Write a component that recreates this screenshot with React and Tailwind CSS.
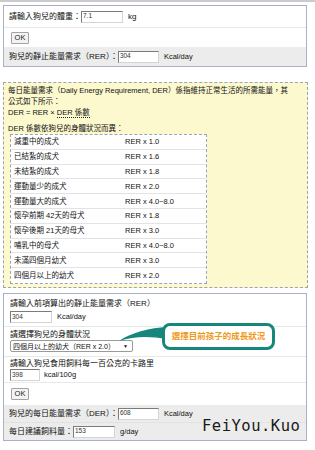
import React from "react";

function Input({ w, value }) {
  return (
    <span
      className={`${w} h-[12px] inline-flex items-center bg-white border border-t-[#7b7b7b] border-l-[#7b7b7b] border-r-[#d4d4d4] border-b-[#d4d4d4] pl-[1px] text-[6.5px] leading-none text-[#333]`}
    >
      {value}
    </span>
  );
}

function Btn() {
  return (
    <span className="w-[18px] h-[12px] inline-flex items-center justify-center bg-[#f3f3f3] border border-[#a3a3a3] rounded-[1px] text-[7.5px] leading-none text-[#222]">
      OK
    </span>
  );
}

const rows = [
  ["減重中的成犬", "RER x 1.0"],
  ["已結紮的成犬", "RER x 1.6"],
  ["未結紮的成犬", "RER x 1.8"],
  ["運動量少的成犬", "RER x 2.0"],
  ["運動量大的成犬", "RER x 4.0~8.0"],
  ["懷孕前期 42天的母犬", "RER x 1.8"],
  ["懷孕後期 21天的母犬", "RER x 3.0"],
  ["哺乳中的母犬", "RER x 4.0~8.0"],
  ["未滿四個月幼犬", "RER x 3.0"],
  ["四個月以上的幼犬", "RER x 2.0"],
];

export default function App() {
  return (
    <div className="relative w-[315px] h-[450px] overflow-hidden bg-white text-[#111] font-['Liberation_Sans','Noto_Sans_CJK_TC',sans-serif] text-[8px]">
      <div className="h-[2px] bg-[#cbcbcb]" />

      {/* Panel 1 */}
      <div className="mt-[3px] ml-[3px] w-[304px] border border-[#a9b1c6] bg-white">
        <div className="h-[22px] flex items-center pl-[5px] border-b border-[#e8e8e8]">
          <span>請輸入狗兒的體重：</span>
          <Input w="w-[42px]" value="7.1" />
          <span className="ml-[5px]">kg</span>
        </div>
        <div className="h-[19px] flex items-center pl-[7px]">
          <Btn />
        </div>
        <div className="h-[19px] flex items-center pl-[5px] bg-[#ececec]">
          <span>狗兒的靜止能量需求（RER）：</span>
          <Input w="w-[41px]" value="304" />
          <span className="ml-[5px] text-[7.5px]">Kcal/day</span>
        </div>
      </div>

      {/* Panel 2 */}
      <div className="mt-[15px] ml-[3px] w-[305px] h-[206px] border border-dashed border-[#9ea3b2] bg-[#fcf9cf] pl-[4px] pt-[2px] text-[7.5px] leading-[11px]">
        <div className="whitespace-nowrap">
          每日能量需求（Daily Energy Requirement, DER）係指維持正常生活的所需能量，其
        </div>
        <div>公式如下所示：</div>
        <div className="mb-[5px]">
          DER = RER × <span className="border-b border-dotted border-[#222]">DER 係數</span>
        </div>
        <div>DER 係數依狗兒的身體狀況而異：</div>
        <div className="ml-[2px] w-[197px] border border-dashed border-[#9ea3b2] bg-white">
          {rows.map(([a, b], i) => (
            <div
              key={i}
              className={`h-[14.8px] grid grid-cols-[111px_1fr] items-center pl-[3px] ${
                i < rows.length - 1 ? "border-b border-[#e3e3e3]" : ""
              }`}
            >
              <span>{a}</span>
              <span>{b}</span>
            </div>
          ))}
        </div>
      </div>

      {/* Panel 3 */}
      <div className="mt-[5px] ml-[3px] w-[304px] border border-[#a9b1c6] bg-white">
        <div className="h-[33px] pl-[6px] pt-[4px] border-b border-[#e8e8e8]">
          <div className="leading-[11px]">請輸入前項算出的靜止能量需求（RER）</div>
          <div className="mt-[2px] flex items-center">
            <Input w="w-[42px]" value="304" />
            <span className="ml-[5px] text-[7.5px]">Kcal/day</span>
          </div>
        </div>
        <div className="h-[30px] pl-[6px] pt-[2px] border-b border-[#e8e8e8]">
          <div className="leading-[11px]">請選擇狗兒的身體狀況</div>
          <div className="w-[123px] h-[12px] flex items-center justify-between bg-white border border-[#9a9a9a] rounded-[2px] px-[2px] text-[7px] leading-none">
            <span>四個月以上的幼犬（RER x 2.0）</span>
            <span className="text-[5px] mr-[2px]">▼</span>
          </div>
        </div>
        <div className="h-[26px] pl-[6px] pt-[1px] border-b border-[#e8e8e8]">
          <div className="leading-[11px]">請輸入狗兒食用飼料每一百公克的卡路里</div>
          <div className="flex items-center">
            <Input w="w-[30px]" value="398" />
            <span className="ml-[4px] text-[7.5px]">kcal/100g</span>
          </div>
        </div>
        <div className="h-[22px] flex items-center pl-[7px]">
          <Btn />
        </div>
        <div className="h-[18px] flex items-center pl-[5px] bg-[#ececec] border-b border-[#e2e2e2]">
          <span>狗兒的每日能量需求（DER）：</span>
          <Input w="w-[41px]" value="608" />
          <span className="ml-[5px] text-[7.5px]">Kcal/day</span>
        </div>
        <div className="h-[17px] flex items-center pl-[5px] bg-[#ececec]">
          <span>每日建議飼料量：</span>
          <Input w="w-[42px]" value="153" />
          <span className="ml-[5px] text-[7.5px]">g/day</span>
        </div>
      </div>

      {/* Callout tail */}
      <svg className="absolute left-0 top-0" width="315" height="450" viewBox="0 0 315 450">
        <path
          d="M167,327 C150,328 132,332 119,341 C134,336 150,336 167,339 Z"
          fill="#17877c"
        />
      </svg>
      {/* Callout box */}
      <div className="absolute left-[162px] top-[323px] w-[113px] h-[27px] border-[3px] border-[#17877c] rounded-[8px] bg-white flex items-center justify-center">
        <span className="text-[8.5px] font-bold text-[#ee9a1c] leading-none">選擇目前孩子的成長狀況</span>
      </div>

      {/* Watermark */}
      <div className="absolute left-[202px] top-[419px] text-[15.5px] leading-none tracking-[0.5px] text-[#1a1a1a] font-['DejaVu_Sans_Mono',monospace]">
        FeiYou.Kuo
      </div>
    </div>
  );
}
